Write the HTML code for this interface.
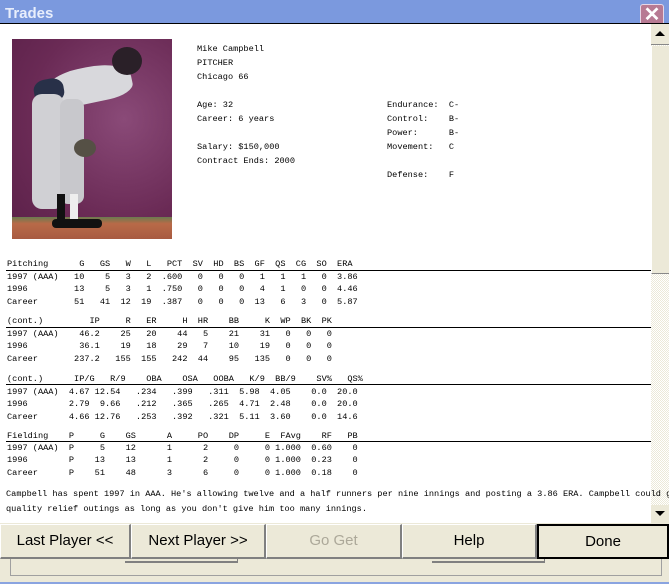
<!DOCTYPE html>
<html><head><meta charset="utf-8"><style>
*{margin:0;padding:0;box-sizing:border-box}
html,body{width:669px;height:584px;overflow:hidden}
body{background:#ece9d8;position:relative;font-family:"Liberation Mono",monospace}
.t{position:absolute;font-size:8.6px;line-height:10px;white-space:pre;color:#000}
.hl{position:absolute;left:6px;width:645px;height:1px;background:#000}
.btn{position:absolute;top:524px;height:35px;background:#ece9d8;border-top:1px solid #fff;border-left:1px solid #fff;border-right:2px solid #808080;border-bottom:2px solid #808080;font-family:"Liberation Sans",sans-serif;font-size:15px;text-align:center;line-height:32px;color:#000;white-space:nowrap}
</style></head><body>
<div style="position:absolute;left:0;top:0;width:669px;height:24px;background:#7b99de"></div>
<div style="position:absolute;left:5px;top:5px;font-family:'Liberation Sans',sans-serif;font-weight:bold;font-size:15px;color:#e8eefc">Trades</div>
<div style="position:absolute;left:640px;top:4px;width:24px;height:22px;background:#b77a93;border:1px solid #e6d6e6;border-radius:3px;color:#fff;font:bold 20px 'Liberation Sans',sans-serif;text-align:center;line-height:20px">✕</div>
<div style="position:absolute;left:0;top:23px;width:669px;height:1px;background:#000"></div>
<div style="position:absolute;left:0;top:24px;width:651px;height:499px;background:#fff"></div>
<!-- scrollbar -->
<div style="position:absolute;left:651px;top:24px;width:18px;height:499px;background:repeating-conic-gradient(#ece9d8 0 25%,#fff 0 50%) 0 0/2px 2px"></div>
<div style="position:absolute;left:651px;top:24px;width:18px;height:21px;background:#ece9d8;border-bottom:1px solid #888"></div>
<div style="position:absolute;left:655px;top:31px;width:0;height:0;border-left:5px solid transparent;border-right:5px solid transparent;border-bottom:5px solid #000"></div>
<div style="position:absolute;left:651px;top:46px;width:18px;height:228px;background:#ece9d8;border-left:1px solid #fff;border-bottom:1px solid #888"></div>
<div style="position:absolute;left:651px;top:505px;width:18px;height:18px;background:#ece9d8"></div>
<div style="position:absolute;left:655px;top:511px;width:0;height:0;border-left:5px solid transparent;border-right:5px solid transparent;border-top:5px solid #000"></div>
<!-- photo -->
<div style="position:absolute;left:12px;top:39px;width:160px;height:200px;overflow:hidden;background:radial-gradient(ellipse at 70% 40%,#8a4a78,#6a2a55 60%,#5a2048)">
<div style="position:absolute;left:0;top:178px;width:160px;height:22px;background:linear-gradient(#6a7a50,#b86a48 30%,#a85a40)"></div>
<div style="position:absolute;left:35px;top:28px;width:85px;height:36px;background:#d8d8dc;border-radius:40% 50% 30% 30%;transform:rotate(-12deg)"></div>
<div style="position:absolute;left:22px;top:40px;width:30px;height:24px;background:#283048;border-radius:40%;transform:rotate(-10deg)"></div>
<div style="position:absolute;left:20px;top:55px;width:32px;height:115px;background:#d0d0d4;border-radius:10px"></div>
<div style="position:absolute;left:48px;top:60px;width:24px;height:105px;background:#c8c8cc;border-radius:8px"></div>
<div style="position:absolute;left:100px;top:8px;width:30px;height:28px;background:#2a2028;border-radius:50%"></div>
<div style="position:absolute;left:62px;top:100px;width:22px;height:18px;background:#555045;border-radius:50%"></div>
<div style="position:absolute;left:45px;top:155px;width:8px;height:28px;background:#111"></div>
<div style="position:absolute;left:58px;top:155px;width:8px;height:28px;background:#eee"></div>
<div style="position:absolute;left:40px;top:180px;width:50px;height:9px;background:#111;border-radius:4px"></div>
</div>
<div class="t" style="left:197px;top:42px;line-height:14px">Mike Campbell
PITCHER
Chicago 66

Age: 32
Career: 6 years

Salary: $150,000
Contract Ends: 2000</div>
<div class="t" style="left:387px;top:98px;line-height:14px">Endurance:  C-
Control:    B-
Power:      B-
Movement:   C

Defense:    F</div>
<div class="t" style="left:7px;top:258px;line-height:12.5px">Pitching      G   GS   W   L   PCT  SV  HD  BS  GF  QS  CG  SO  ERA
1997 (AAA)   10    5   3   2  .600   0   0   0   1   1   1   0  3.86
1996         13    5   3   1  .750   0   0   0   4   1   0   0  4.46
Career       51   41  12  19  .387   0   0   0  13   6   3   0  5.87</div>
<div class="hl" style="top:270px"></div>
<div class="t" style="left:7px;top:315px;line-height:12.5px">(cont.)         IP     R   ER     H  HR    BB     K  WP  BK  PK
1997 (AAA)    46.2    25   20    44   5    21    31   0   0   0
1996          36.1    19   18    29   7    10    19   0   0   0
Career       237.2   155  155   242  44    95   135   0   0   0</div>
<div class="hl" style="top:327px"></div>
<div class="t" style="left:7px;top:373px;line-height:12.5px">(cont.)      IP/G   R/9    OBA    OSA   OOBA   K/9  BB/9    SV%   QS%
1997 (AAA)  4.67 12.54   .234   .399   .311  5.98  4.05    0.0  20.0
1996        2.79  9.66   .212   .365   .265  4.71  2.48    0.0  20.0
Career      4.66 12.76   .253   .392   .321  5.11  3.60    0.0  14.6</div>
<div class="hl" style="top:384px"></div>
<div class="t" style="left:7px;top:430px;line-height:12.2px">Fielding    P     G    GS      A     PO    DP     E  FAvg    RF   PB
1997 (AAA)  P     5    12      1      2     0     0 1.000  0.60    0
1996        P    13    13      1      2     0     0 1.000  0.23    0
Career      P    51    48      3      6     0     0 1.000  0.18    0</div>
<div class="hl" style="top:441px"></div>
<div class="t" style="left:6px;top:487px;line-height:14.5px">Campbell has spent 1997 in AAA. He's allowing twelve and a half runners per nine innings and posting a 3.86 ERA. Campbell could g
quality relief outings as long as you don't give him too many innings.</div>
<!-- bottom -->
<div style="position:absolute;left:10px;top:556px;width:652px;height:20px;border:1px solid #a0a0a0;border-top:none"></div>
<div style="position:absolute;left:125px;top:556px;width:113px;height:7px;border-bottom:2px solid #808080;border-right:1px solid #808080"></div>
<div style="position:absolute;left:432px;top:556px;width:113px;height:7px;border-bottom:2px solid #808080;border-right:1px solid #808080"></div>
<div style="position:absolute;left:0;top:582px;width:669px;height:2px;background:#8aa4e0"></div>
<div class="btn" style="left:0;width:131px">Last Player &lt;&lt;</div>
<div class="btn" style="left:131px;width:135px">Next Player &gt;&gt;</div>
<div class="btn" style="left:266px;width:136px;color:#aca899">Go Get</div>
<div class="btn" style="left:402px;width:135px">Help</div>
<div class="btn" style="left:537px;width:132px;border:2px solid #000;line-height:32px">Done</div>
</body></html>
